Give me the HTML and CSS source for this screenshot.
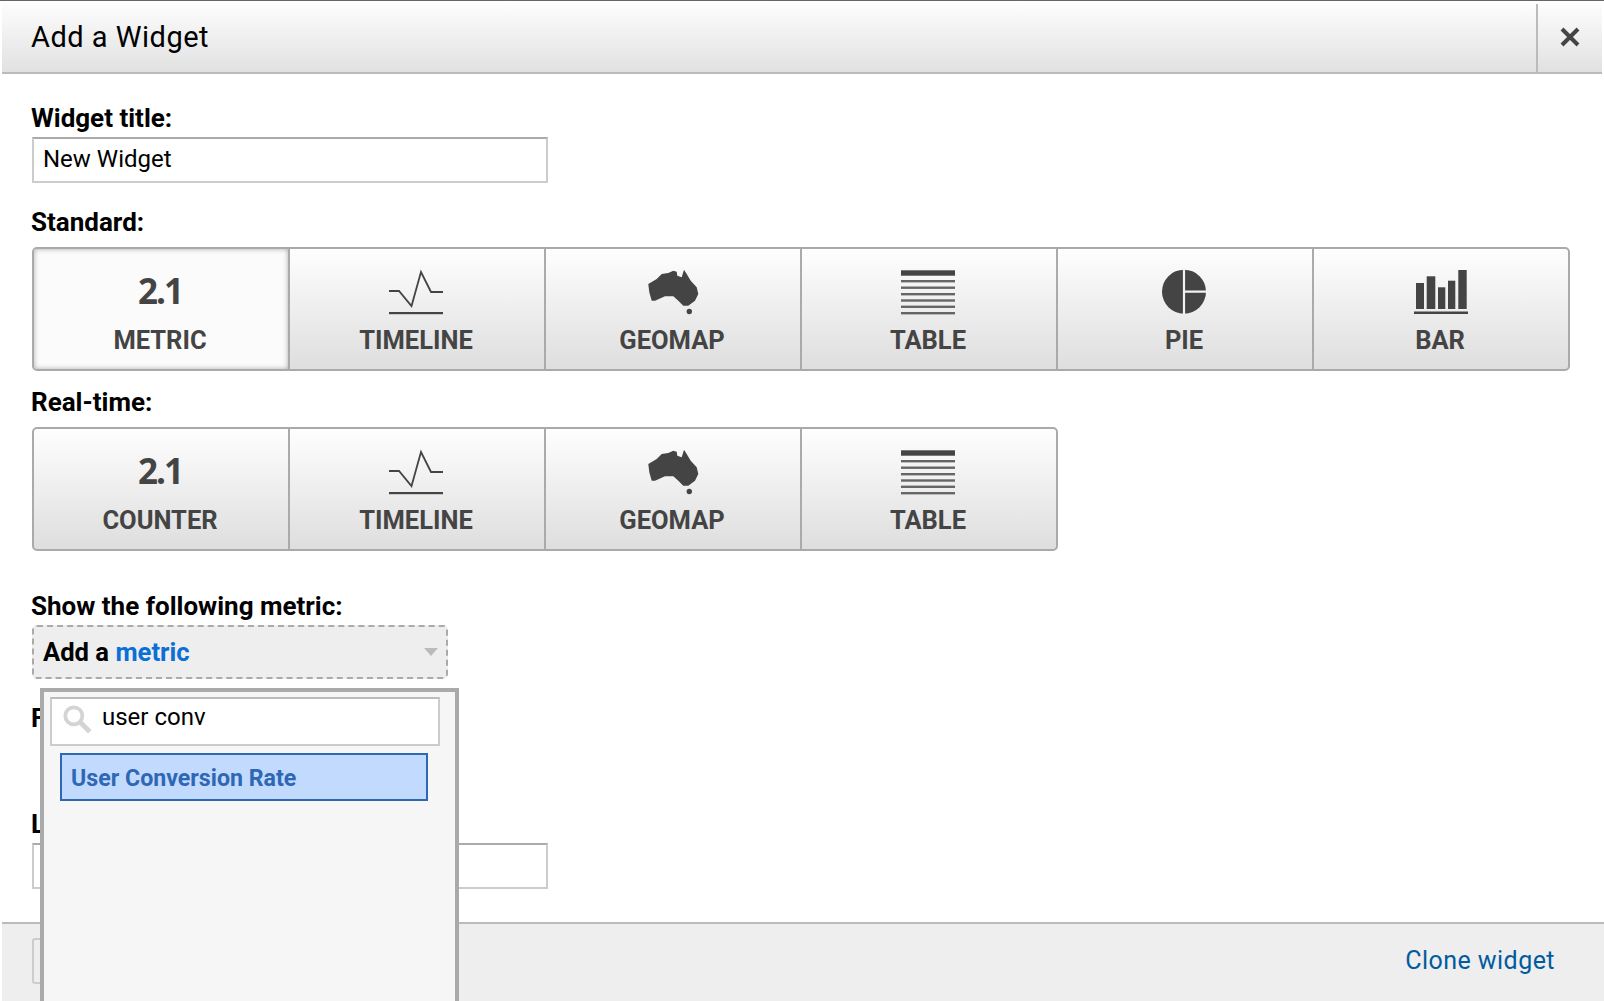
FILE: index.html
```html
<!DOCTYPE html>
<html lang="en">
<head>
    <meta charset="UTF-8">
    <title>Add a Widget</title>
    <link rel="stylesheet" href="styles.css">
</head>
<body>
    <div class="dialog">
        <div class="header">
            <div class="title">Add a Widget</div>
            <div class="close">
                <svg width="20" height="20" viewBox="0 0 20 20"><path d="M2 2 L18 18 M18 2 L2 18" stroke="#444" stroke-width="4" fill="none"/></svg>
            </div>
        </div>
        <div class="main">
            <div class="label">Widget title:</div>
            <div class="input">New Widget</div>

            <div class="label section">Standard:</div>
            <div class="types">
                <div class="type selected">
                    <div class="icon number">2.1</div>
                    <div class="name">METRIC</div>
                </div>
                <div class="type">
                    <svg class="icon" viewBox="0 0 60 48"><path d="M3 24 H13 L25.5 39 L35 5 L45 25 H57" stroke="#444" stroke-width="1.8" fill="none"/><rect x="3" y="45" width="54" height="2.2" fill="#444"/></svg>
                    <div class="name">TIMELINE</div>
                </div>
                <div class="type">
                    <svg class="icon" viewBox="0 0 60 48"><path d="M6.3 17 L14.7 12 L19.7 7 L26.3 6 L31.3 3.7 L34.7 4.7 L35.3 8.7 L39.7 10.3 L42 2.7 L44.7 7 L48.7 13.7 L54.7 20.3 L56.3 27 L53 33.7 L46.3 38.7 L41.3 38.7 L36.3 33.7 L31.3 29.3 L23 29.3 L13 33.7 L9.7 33.7 L7.3 25.3 Z" fill="#444"/><circle cx="47.3" cy="44.5" r="2.7" fill="#444"/></svg>
                    <div class="name">GEOMAP</div>
                </div>
                <div class="type">
                    <svg class="icon" viewBox="0 0 60 48"><rect x="3" y="3.3" width="54" height="5.4" fill="#444"/><g fill="#666"><rect x="3" y="13" width="54" height="2.4"/><rect x="3" y="19.5" width="54" height="2.4"/><rect x="3" y="26" width="54" height="2.4"/><rect x="3" y="32.3" width="54" height="2.4"/><rect x="3" y="38.6" width="54" height="2.4"/><rect x="3" y="45" width="54" height="2.4"/></g></svg>
                    <div class="name">TABLE</div>
                </div>
                <div class="type">
                    <svg class="icon" viewBox="0 0 60 48"><circle cx="30" cy="24.7" r="22" fill="#444"/><path d="M30 2 V47 M30 24.7 H52" stroke="#f2f2f2" stroke-width="2.2" fill="none"/></svg>
                    <div class="name">PIE</div>
                </div>
                <div class="type">
                    <svg class="icon" viewBox="0 0 60 48"><g fill="#444"><rect x="6" y="16" width="8" height="26"/><rect x="16.7" y="9.3" width="8.6" height="32.7"/><rect x="28" y="20.3" width="7.3" height="21.7"/><rect x="38" y="13.7" width="7.3" height="28.3"/><rect x="48.3" y="3" width="8.4" height="39"/><rect x="4" y="44.5" width="54" height="2.5"/></g></svg>
                    <div class="name">BAR</div>
                </div>
            </div>

            <div class="label after-row">Real-time:</div>
            <div class="types realtime">
                <div class="type">
                    <div class="icon number">2.1</div>
                    <div class="name">COUNTER</div>
                </div>
                <div class="type">
                    <svg class="icon" viewBox="0 0 60 48"><path d="M3 24 H13 L25.5 39 L35 5 L45 25 H57" stroke="#444" stroke-width="1.8" fill="none"/><rect x="3" y="45" width="54" height="2.2" fill="#444"/></svg>
                    <div class="name">TIMELINE</div>
                </div>
                <div class="type">
                    <svg class="icon" viewBox="0 0 60 48"><path d="M6.3 17 L14.7 12 L19.7 7 L26.3 6 L31.3 3.7 L34.7 4.7 L35.3 8.7 L39.7 10.3 L42 2.7 L44.7 7 L48.7 13.7 L54.7 20.3 L56.3 27 L53 33.7 L46.3 38.7 L41.3 38.7 L36.3 33.7 L31.3 29.3 L23 29.3 L13 33.7 L9.7 33.7 L7.3 25.3 Z" fill="#444"/><circle cx="47.3" cy="44.5" r="2.7" fill="#444"/></svg>
                    <div class="name">GEOMAP</div>
                </div>
                <div class="type">
                    <svg class="icon" viewBox="0 0 60 48"><rect x="3" y="3.3" width="54" height="5.4" fill="#444"/><g fill="#666"><rect x="3" y="13" width="54" height="2.4"/><rect x="3" y="19.5" width="54" height="2.4"/><rect x="3" y="26" width="54" height="2.4"/><rect x="3" y="32.3" width="54" height="2.4"/><rect x="3" y="38.6" width="54" height="2.4"/><rect x="3" y="45" width="54" height="2.4"/></g></svg>
                    <div class="name">TABLE</div>
                </div>
            </div>

            <div class="label metric-label">Show the following metric:</div>
            <div class="metric-field">
                <div class="add-metric">
                    <span>Add a <span class="blue">metric</span></span>
                    <div class="caret"></div>
                </div>
                <div class="popup">
                    <div class="search">
                        <svg width="32" height="32" viewBox="0 0 30 30"><circle cx="12" cy="12" r="8" fill="none" stroke="#d4d4d4" stroke-width="3.5"/><path d="M18 18 L27 27" stroke="#d4d4d4" stroke-width="4.5"/></svg>
                        <span>user conv</span>
                    </div>
                    <div class="result">User Conversion Rate</div>
                </div>
            </div>

            <div class="label section filter-label">Filter this data:</div>
            <div class="label link-label">Link to Report or URL:</div>
            <div class="input"></div>
        </div>
        <div class="footer">
            <div class="save"></div>
            <a class="clone">Clone widget</a>
        </div>
    </div>
</body>
</html>
```

FILE: styles.css
```css
html, body {
    margin: 0;
    height: 100%;
    overflow: hidden;
}
body {
    font-family: Roboto, Arial, sans-serif;
    background-color: #fff;
    color: #000;
}
.dialog {
    height: 1001px;
    padding-left: 2px;
    border-top: 1px solid #666;
    box-sizing: border-box;
    display: flex;
    flex-direction: column;
}
.header {
    height: 71px;
    margin-right: 2px;
    display: flex;
    justify-content: space-between;
    background: linear-gradient(#fefefe, #e1e1e1);
    border-bottom: 2px solid #bbb;
}
.title {
    font-size: 29px;
    line-height: 72px;
    padding-left: 29px;
    letter-spacing: 0.5px;
}
.close {
    width: 64px;
    margin-top: 3px;
    border-left: 2px solid #bbb;
    display: flex;
    align-items: center;
    justify-content: center;
    padding-bottom: 2px;
}
.main {
    flex: 1;
    padding: 29px 0 0 30px;
}
.label {
    font-size: 26px;
    font-weight: 700;
    line-height: 30px;
    margin-bottom: 4px;
    margin-left: -1px;
}
.section {
    margin-top: 24px;
}
.input {
    width: 503px;
    height: 42px;
    padding-left: 9px;
    border: 2px solid #ccc;
    border-top-color: #aaa;
    font-size: 24px;
    line-height: 40px;
}
.types {
    width: 1538px;
    height: 124px;
    margin-top: 10px;
    box-sizing: border-box;
    display: flex;
    border: 2px solid #aaa;
    border-radius: 5px;
    background: linear-gradient(#fefefe, #dedede);
}
.types.realtime {
    width: 1026px;
}
.after-row {
    margin-top: 16px;
    margin-bottom: 0;
}
.type {
    flex: 1;
    padding-right: 2px;
    border-left: 2px solid #aaa;
    display: flex;
    flex-direction: column;
    align-items: center;
    color: #444;
}
.type:first-child {
    border-left: none;
}
.type.selected {
    background: #fbfbfb;
    border-radius: 3px 0 0 3px;
    box-shadow: inset 0 0 5px #aaa;
}
.icon {
    width: 60px;
    height: 48px;
    margin-top: 18px;
}
.number {
    font-family: "Open Sans", Arial, sans-serif;
    font-size: 35px;
    font-weight: 700;
    line-height: 48px;
    letter-spacing: -2px;
    text-align: center;
}
.name {
    font-size: 25.5px;
    font-weight: 700;
    line-height: 30px;
    margin-top: 10px;
}
.metric-label {
    margin-top: 40px;
}
.metric-field {
    position: relative;
    width: 416px;
}
.add-metric {
    height: 54px;
    box-sizing: border-box;
    padding: 0 8px 0 9px;
    display: flex;
    align-items: center;
    justify-content: space-between;
    border: 2px dashed #aaa;
    border-radius: 5px;
    background-color: #eee;
    font-size: 25.6px;
    font-weight: 700;
}
.blue {
    color: #0a6fd6;
}
.caret {
    width: 0;
    height: 0;
    border-left: 7px solid transparent;
    border-right: 7px solid transparent;
    border-top: 8px solid #bbb;
}
.popup {
    position: absolute;
    top: 63px;
    left: 8px;
    width: 419px;
    height: 340px;
    box-sizing: border-box;
    padding: 5px 6px;
    background-color: #f6f6f6;
    border: 4px solid #aaa;
    z-index: 2;
}
.search {
    height: 49px;
    width: 390px;
    box-sizing: border-box;
    display: flex;
    align-items: flex-start;
    gap: 9px;
    padding: 1px 0 0 9px;
    border: 2px solid #ccc;
    border-top-color: #bbb;
    background-color: #fff;
    font-size: 24px;
    line-height: 34px;
}
.search svg {
    margin-top: 3px;
}
.result {
    width: 368px;
    height: 48px;
    box-sizing: border-box;
    margin: 7px 0 0 10px;
    padding-left: 9px;
    border: 2px solid #2e68b5;
    background-color: #c3daff;
    color: #2e68b5;
    font-size: 23.2px;
    font-weight: 700;
    line-height: 46px;
}
.filter-label {
    margin-bottom: 76px;
}
.footer {
    height: 79px;
    box-sizing: border-box;
    padding: 0 49px 4px 30px;
    display: flex;
    align-items: center;
    justify-content: space-between;
    border-top: 2px solid #bbb;
    background-color: #eee;
}
.save {
    width: 100px;
    height: 46px;
    border: 2px solid #ccc;
    border-radius: 3px;
    box-sizing: border-box;
}
.clone {
    font-size: 25px;
    color: #005c9e;
    letter-spacing: 0.45px;
}
```
